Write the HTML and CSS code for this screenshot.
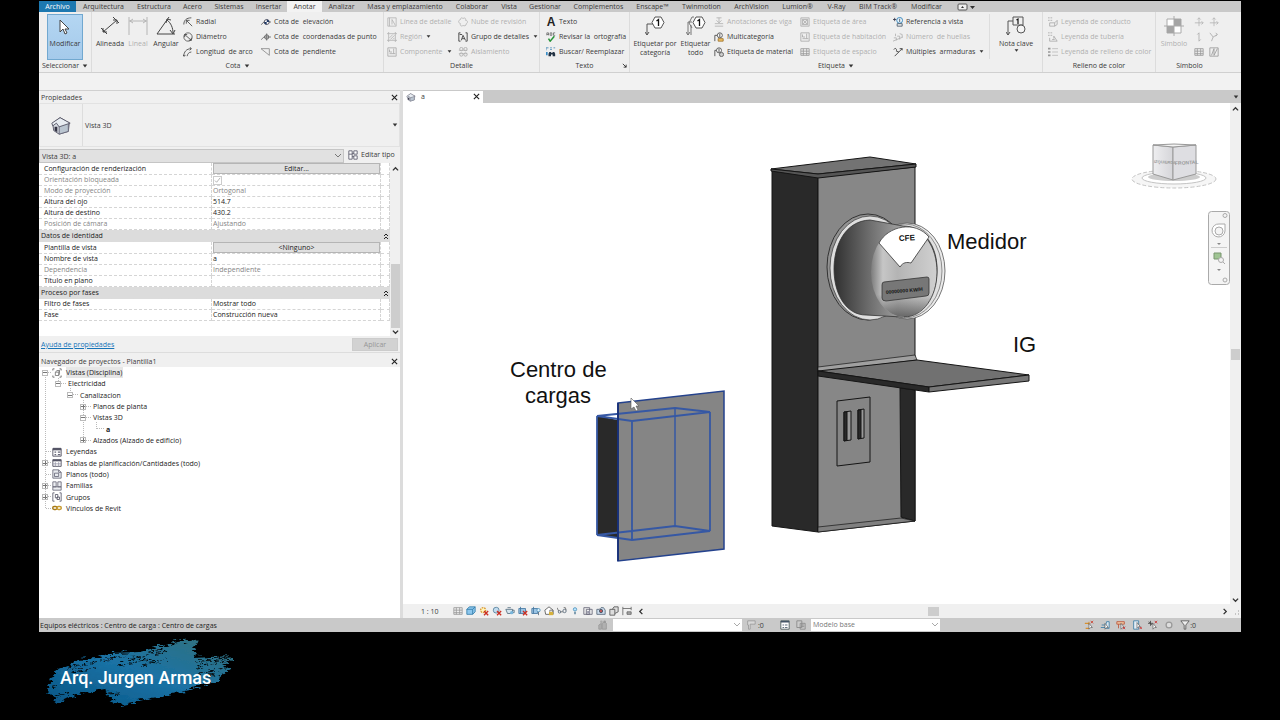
FILE: index.html
```html
<!DOCTYPE html>
<html lang="es">
<head>
<meta charset="utf-8">
<title>Plantilla1 - Vista 3D: a</title>
<link rel="stylesheet" href="styles.css">
</head>
<body>
<svg class="defs" aria-hidden="true">
  <defs>
    <symbol id="cursor" viewBox="0 0 12 16"><path d="M1 1v12l3-3 2 5 2-1-2-4h4z" fill="#fff" stroke="#444"/></symbol>
    <symbol id="aligned" viewBox="0 0 20 20"><path d="M3 16 17 4M1 12l6 6M13 1l6 6M3 12v4h4M13 4h4v4" fill="none" stroke="#444"/></symbol>
    <symbol id="linear" viewBox="0 0 20 20"><path d="M1 1v18M19 1v18M1 5h18M5 3 2 5l3 2M15 3l3 2-3 2" fill="none" stroke="#b5b5b5"/></symbol>
    <symbol id="angular" viewBox="0 0 20 20"><path d="M1 18h18M1 18 13 1M11 4c4 3 6 8 6 13M10 7l1-4 4 1M14 14l3 4 2-4" fill="none" stroke="#444"/></symbol>
    <symbol id="radial" viewBox="0 0 12 12"><path d="M1 9C1 4 4 1 10 1M4 4l7 7M4 8V4h4" fill="none" stroke="#444"/></symbol>
    <symbol id="diameter" viewBox="0 0 12 12"><circle cx="6" cy="6" r="5" fill="none" stroke="#555"/><path d="m2 3 8 7M2 6V3h3M10 7v3H7" fill="none" stroke="#444"/></symbol>
    <symbol id="arc" viewBox="0 0 12 12"><path d="M1 11C1 6 4 2 10 2M5 11c0-2 2-5 5-5M8 0l2 2-2 2M0 9l1 2 2-1" fill="none" stroke="#444"/></symbol>
    <symbol id="elev" viewBox="0 0 14 12"><path d="m0 10 4-4h10" fill="none" stroke="#444"/><circle cx="8" cy="6" r="3.500" fill="#fff" stroke="#223"/><path d="M8 6V2.500a3.500 3.500 0 0 1 3.500 3.500zM8 6v3.500A3.500 3.500 0 0 1 4.500 6z" fill="#223a66"/></symbol>
    <symbol id="coord" viewBox="0 0 14 12"><path d="m0 10 4-4h10M8 1v10" fill="none" stroke="#555"/><circle cx="8" cy="6" r="3" fill="none" stroke="#444"/></symbol>
    <symbol id="slope" viewBox="0 0 12 12"><path d="M0 2h10v8z" fill="none" stroke="#888"/></symbol>
    <symbol id="detline" viewBox="0 0 12 12"><path d="M1 1h10v10H1zM3 1v10M6 3l4 7M6 3v6" fill="none" stroke="#b5b5b5"/></symbol>
    <symbol id="region" viewBox="0 0 12 12"><path d="M2 0v12M10 0v12M0 2h12M0 10h12M3 7l4-4M4 9l5-5M7 9l2-2" fill="none" stroke="#b5b5b5"/></symbol>
    <symbol id="component" viewBox="0 0 12 12"><path d="M1 1h10v10H1zM3 8h7M8 2v6M3 3v3h3" fill="none" stroke="#a8a8a8"/></symbol>
    <symbol id="cloud" viewBox="0 0 12 12"><path d="M3 3c0-3 3-2 3-1 2-2 4 0 3 2 3 0 3 3 1 4 0 3-3 3-4 2-2 2-4 0-3-2-3-1-3-4 0-5z" fill="none" stroke="#b5b5b5"/></symbol>
    <symbol id="detgroup" viewBox="0 0 12 12"><path d="M3 1H1v10h2M9 1h2v10H9M4 10l2-6 3 6M5 8h3M2 3h3" fill="none" stroke="#333"/></symbol>
    <symbol id="insul" viewBox="0 0 12 12"><path d="M1 4h10M1 8h10" stroke="#bbb"/><g fill="none" stroke="#aaa"><circle cx="4" cy="2.500" r="2"/><circle cx="9" cy="2.500" r="2"/><circle cx="4" cy="9" r="2"/><circle cx="9" cy="9" r="2"/></g></symbol>
    <symbol id="spell" viewBox="0 0 12 12"><path d="M1 4V1h2v3M1 3h2M5 1v3h2V1zM9 4V1h2M9 4h2" fill="none" stroke="#555" stroke-width=".8"/><path d="m3 8 2 3 5-6" fill="none" stroke="#269436" stroke-width="1.800"/></symbol>
    <symbol id="find" viewBox="0 0 12 12"><path d="M0 4V1h3M5 1h2M5 3h2M9 1h2" fill="none" stroke="#3e85b5"/><path d="M4 6h2v5H3V8zm4 0h2l1 2v3H8zM5 7h4v2H5z" fill="#234"/><path d="M1 6v4" stroke="#398cc5" stroke-width="2"/></symbol>
    <symbol id="tag" viewBox="0 0 20 20"><path d="M2 19V8h6M0 16l2 3 2-3" fill="none" stroke="#555"/><path d="M10 1h6l3 5.500-3 5.500h-6L7 6.500z" fill="#fff" stroke="#555"/><path d="m11.500 5 2-1.500V10" fill="none" stroke="#111" stroke-width="1.300"/></symbol>
    <symbol id="tags" viewBox="0 0 20 20"><path d="M2 19V6h4M5 19V9M0 16l2 3 2-3M8 1H6L3 7l3 5" fill="none" stroke="#777"/><path d="M10 1h6l3 5.500-3 5.500h-6L7 6.500z" fill="#fff" stroke="#555"/><path d="m11.500 5 2-1.500V10" fill="none" stroke="#111" stroke-width="1.300"/></symbol>
    <symbol id="beam" viewBox="0 0 12 12"><path d="M1 8h10M1 11h10M6 1v6M3 4l3 3 3-3M3 1h6" fill="none" stroke="#b0b0b0"/></symbol>
    <symbol id="multi" viewBox="0 0 12 12"><path d="M1 11V4h4" fill="none" stroke="#444"/><circle cx="7" cy="4" r="3" fill="#fff" stroke="#444"/><path d="M7 2v4" stroke="#333"/><path d="M5 8h6v3H5z" fill="#f3c465" stroke="#9b7028"/></symbol>
    <symbol id="material" viewBox="0 0 12 12"><path d="M1 11V4h3" fill="none" stroke="#444"/><circle cx="6" cy="4" r="3" fill="#fff" stroke="#444"/><path d="M6 2v4" stroke="#333"/><circle cx="9" cy="9" r="2.500" fill="#ccc" stroke="#555"/></symbol>
    <symbol id="area" viewBox="0 0 12 12"><path d="M1 1h10v10H1zM3 3h6v6H3zM3 9l6-6M3 3l6 6" fill="#e4e4e4" stroke="#b0b0b0"/></symbol>
    <symbol id="viewref" viewBox="0 0 12 12"><path d="M0 3h4M2 1v4" fill="none" stroke="#334"/><circle cx="8" cy="4" r="3.500" fill="#e8f3fa" stroke="#287db7"/><path d="M8 2v4M5 8h6v3H5z" fill="none" stroke="#456"/></symbol>
    <symbol id="steps" viewBox="0 0 12 12"><path d="m0 11 12-5M1 7h3v3M5 5h3v4M8 2l3 1v3M3 2v3" fill="none" stroke="#b0b0b0"/></symbol>
    <symbol id="rebar" viewBox="0 0 12 12"><path d="m2 11 9-9M1 3c2-3 4 0 3 2l3 1M8 2h3v2" fill="none" stroke="#333"/></symbol>
    <symbol id="keynote" viewBox="0 0 20 20"><path d="M2 19V5h5M0 16l2 3 2-3M7 1h10v8H7z" fill="none" stroke="#555"/><circle cx="15" cy="13" r="4" fill="#f4f4f4" stroke="#555"/><path d="m10.500 4 1.500-1v5" fill="none" stroke="#111" stroke-width="1.200"/></symbol>
    <symbol id="legend" viewBox="0 0 12 12"><path d="M0 1h2M3 1h2M0 4h2M3 4h2M2 7h6v4H2zM8 7l3-3v5l-3 2" fill="none" stroke="#aaa"/></symbol>
    <symbol id="pipe" viewBox="0 0 12 12"><path d="M0 1h2M3 1h2M0 4h2M3 4h2M2 7v4h9L7 5v3M5 9h3" fill="none" stroke="#aaa"/></symbol>
    <symbol id="list" viewBox="0 0 12 12"><path d="M0 2h3M0 6h3M0 10h3" stroke="#999" stroke-width="2"/><path d="M5 2h7M5 6h7M5 10h7" stroke="#bbb"/></symbol>
    <symbol id="target" viewBox="0 0 20 20"><path d="M3 3h14v14H3z" fill="#fff" stroke="#aaa"/><path d="M10 3h7v7h-7zM3 10h7v7H3z" fill="#a5a5a5"/><path d="M10 0v20M0 10h20" stroke="#aaa"/></symbol>
    <symbol id="span" viewBox="0 0 12 12"><path d="M6 1v10M1 7h10M4 3l2-2 2 2M9 5l2 2-2 2" fill="none" stroke="#b5b5b5"/></symbol>
    <symbol id="vert" viewBox="0 0 12 12"><path d="M6 1v10M4 3l2-2M6 11l2-2" fill="none" stroke="#aaa"/></symbol>
    <symbol id="path" viewBox="0 0 12 12"><path d="m1 1 4 5-2 5M5 6l5-3M8 1l2 2-2 2" fill="none" stroke="#aaa"/></symbol>
    <symbol id="fabric" viewBox="0 0 12 12"><path d="M1 1h10v10H1zM3 10l3-8v8l4-8" fill="none" stroke="#999"/></symbol>
    <symbol id="hatch" viewBox="0 0 12 12"><path d="M1 2h10v8H1zM1 5h10M1 8h10M4 2v8M8 2v8" fill="none" stroke="#999"/></symbol>
    <symbol id="house" viewBox="0 0 24 24"><path d="m3 10 8-6 10 6-1 9-10 3-6-4z" fill="#d8dde4" stroke="#556"/><path d="m10 13 10-4v10l-10 3z" fill="#bac5d0" stroke="#667"/><path d="m2 10 9-6 11 6-12 4-3-4-4 3z" fill="#e8edf2" stroke="#556"/><path d="M5 14h3v6l-3-2z" fill="#334"/></symbol>
    <symbol id="edit" viewBox="0 0 12 12"><path d="M1 1h4v10H1zM1 5h4M7 1h4v4H7zM7 7h4v4H7zM5 4h2M5 8h2" fill="#fff" stroke="#556"/></symbol>
    <symbol id="views" viewBox="0 0 12 12"><path d="M3 1H1v2M9 1h2v2M1 9v2h2M11 9v2H9" fill="none" stroke="#666"/><path d="M4 5h4v4H4zM4 5l2-2h3v4L8 9M8 5l1-2" fill="none" stroke="#777"/></symbol>
    <symbol id="legendi" viewBox="0 0 12 12"><path d="M1 2h10v9H1z" fill="#fff" stroke="#445"/><path d="M1 1h10v3H1z" fill="#556"/><path d="M3 6h2M7 6h3M3 9h2M7 9h3" stroke="#667" stroke-width="1.500"/></symbol>
    <symbol id="tablei" viewBox="0 0 12 12"><path d="M1 2h10v8H1z" fill="#fff" stroke="#445"/><path d="M1 2h10v2H1z" fill="#556"/><path d="M4 5v5M8 5v5M1 7h10" stroke="#99a"/></symbol>
    <symbol id="sheet" viewBox="0 0 12 12"><path d="M1 1h7l3 3v7H1zM3 5h5v4H3zM8 1v3h3" fill="#e8ebef" stroke="#667"/></symbol>
    <symbol id="family" viewBox="0 0 12 12"><path d="M1 1h4v6H1zM7 1h4v6H7zM1 7h10v4H1z" fill="#eceef2" stroke="#667"/></symbol>
    <symbol id="group" viewBox="0 0 12 12"><path d="M3 1H1v10h2M9 1h2v10H9M4 3h3v4H4zM6 6h3v3H6z" fill="none" stroke="#556"/></symbol>
    <symbol id="link" viewBox="0 0 14 12"><rect x="1" y="4" width="6" height="4" rx="2" fill="none" stroke="#a77a18" stroke-width="2"/><rect x="7" y="4" width="6" height="4" rx="2" fill="none" stroke="#c79a30" stroke-width="2"/></symbol>
    <symbol id="cube" viewBox="0 0 12 12"><path d="M1 4 4 1h7v6l-3 3H1z" fill="#8cc7ee" stroke="#347da9"/><path d="M1 4h7v6M8 4l3-3" fill="none" stroke="#347da9"/></symbol>
    <symbol id="off" viewBox="0 0 12 12"><circle cx="5" cy="5" r="3.500" fill="#c2dcef" stroke="#58829e"/><path d="m6 6 5 5m0-5-5 5" stroke="#cb3024" stroke-width="1.600"/></symbol>
    <symbol id="cropoff" viewBox="0 0 12 12"><path d="M1 3h8v6H1zM3 1v8" fill="#9bc4e4" stroke="#4477a0"/><path d="m6 6 5 5m0-5-5 5" stroke="#cb3024" stroke-width="1.600"/></symbol>
    <symbol id="cropbulb" viewBox="0 0 12 12"><path d="M1 3h7v6H1zM3 1v8" fill="#9bc4e4" stroke="#4477a0"/><circle cx="9" cy="5" r="2" fill="#dff2ff" stroke="#4b91bb"/><path d="M9 7v4" stroke="#567"/></symbol>
    <symbol id="sun" viewBox="0 0 12 12"><circle cx="5" cy="5" r="3" fill="#fff5bb" stroke="#d9952a" stroke-width="1.500" stroke-dasharray="2 1"/><path d="m6 6 5 5m0-5-5 5" stroke="#cb3024" stroke-width="1.600"/></symbol>
    <symbol id="teapot" viewBox="0 0 12 12"><path d="M1 4h8v5H3zM9 5h2v3H9M3 2h4" fill="#d5e5ef" stroke="#556f80"/><circle cx="8" cy="8" r="2" fill="#79b6db"/></symbol>
    <symbol id="crop" viewBox="0 0 12 12"><path d="M1 2h7v8H1zM4 4h7v6H4z" fill="none" stroke="#667"/><path d="M5 6h3v3H5z" fill="#99a"/></symbol>
    <symbol id="cropred" viewBox="0 0 12 12"><path d="M1 4h3l2-2h3l2 3v5H1z" fill="#cde" stroke="#567"/><circle cx="6" cy="6" r="2" fill="#b55" stroke="#456"/></symbol>
    <symbol id="box" viewBox="0 0 12 12"><path d="M1 4h6v7H1zM4 4l2-3h5v6L7 9" fill="#ddd" stroke="#555"/></symbol>
    <symbol id="lock" viewBox="0 0 12 12"><path d="M1 5 6 1l5 4v5H2z" fill="#fff" stroke="#555"/><path d="M6 7h5v4H6z" fill="#d6b13b"/><path d="M7 7V5h3v2" fill="none" stroke="#666"/></symbol>
    <symbol id="glasses" viewBox="0 0 12 12"><path d="m0 2 2 4M4 7h3M10 2l1 3M8 2h2" fill="none" stroke="#666"/><circle cx="3" cy="7" r="1.500" fill="none" stroke="#567"/><circle cx="9" cy="6" r="2" fill="none" stroke="#567"/></symbol>
    <symbol id="bulb" viewBox="0 0 12 12"><circle cx="6" cy="4" r="2" fill="#bce5ff" stroke="#4b91bb"/><path d="M5 7h2v3H5z" fill="#6a8da3"/></symbol>
    <symbol id="dim" viewBox="0 0 12 12"><path d="M1 1v10M1 3h10M11 1v4M6 7h5v3H6z" fill="#aaa" stroke="#666"/></symbol>
    <symbol id="people" viewBox="0 0 12 12"><path d="M1 11V6l3-2v7zM5 11V4l3-2 2 2v7z" fill="#b0b0b0" stroke="#999"/><circle cx="4" cy="2" r="1.500" fill="#aaa"/><circle cx="8" cy="2" r="1.500" fill="#999"/></symbol>
    <symbol id="brush" viewBox="0 0 12 12"><path d="M2 1h9v4H5v6H3V6H2z" fill="#d8d8d8" stroke="#999"/></symbol>
    <symbol id="funnel" viewBox="0 0 12 12"><path d="M1 1h10L7 6v5H5V6z" fill="#eee" stroke="#555"/></symbol>
    <symbol id="sel" viewBox="0 0 12 12"><path d="M2 10h4M1 4h5M6 2v4" fill="none" stroke="#d79030" stroke-width="1.300"/><path d="M6 4v7l2-2h2z" fill="#fff" stroke="#555" stroke-width=".8"/><path d="m8 1 3 3m0-3L8 4" stroke="#cb3f2c"/></symbol>
    <symbol id="sel2" viewBox="0 0 12 12"><path d="M1 9h5l2-7h3v8H6M2 6h5" fill="#dce9f2" stroke="#397ba5"/><path d="M6 4v7l2-2h2z" fill="#fff" stroke="#555" stroke-width=".8"/></symbol>
    <symbol id="sel3" viewBox="0 0 12 12"><path d="M1 2h9v3H1zM3 5v5" fill="#f2c6a0" stroke="#bb553b"/><path d="M6 4v7l2-2h2z" fill="#fff" stroke="#555" stroke-width=".8"/><path d="m8 8 3 3m0-3-3 3" stroke="#c33"/></symbol>
    <symbol id="sel4" viewBox="0 0 12 12"><path d="M2 1h6v10H2z" fill="#e4edf5" stroke="#397ba5"/><path d="M6 3v7l2-2h2z" fill="#fff" stroke="#555" stroke-width=".8"/><path d="m9 8 3 3m0-3-3 3" stroke="#c33"/></symbol>
    <symbol id="sel5" viewBox="0 0 12 12"><path d="M0 4h6M3 1v6M1 2l4 4" fill="none" stroke="#444"/><path d="M6 4v7l2-2h2z" fill="#fff" stroke="#555" stroke-width=".8"/><path d="m8 1 3 3m0-3L8 4" stroke="#c33"/></symbol>
    <symbol id="win" viewBox="0 0 12 12"><path d="M1 1h10v10H1z" fill="#fff" stroke="#455"/><path d="M1 1h10v2H1z" fill="#456"/><path d="M3 6h2M6 6h3M3 9h2M6 9h3" stroke="#456"/></symbol>
    <symbol id="opts" viewBox="0 0 12 12"><path d="M1 1h6v8H1zM5 4h6v7H5zM6 6h4M6 8h4" fill="#ccc" stroke="#888"/></symbol>
    <symbol id="close" viewBox="0 0 8 8"><path d="m1 1 6 6m0-6L1 7" stroke="#222" stroke-width="1.300"/></symbol>
    <symbol id="chev" viewBox="0 0 8 8"><path d="m1 5 3-3 3 3" fill="none" stroke="#333" stroke-width="1.500"/></symbol>
    <symbol id="dchev" viewBox="0 0 8 8"><path d="m2 4 2-2 2 2M2 7l2-2 2 2" fill="none" stroke="#222"/></symbol>
    <symbol id="tri" viewBox="0 0 8 8"><path d="M1 2h6L4 6z" fill="#333"/></symbol>
  </defs>
</svg>

<div class="app">
  <nav class="tabs" aria-label="Cinta">
    <button class="file">Archivo</button><button>Arquitectura</button><button>Estructura</button><button>Acero</button><button>Sistemas</button><button>Insertar</button><button class="active">Anotar</button><button>Analizar</button><button>Masa y emplazamiento</button><button>Colaborar</button><button>Vista</button><button>Gestionar</button><button>Complementos</button><button>Enscape™</button><button>Twinmotion</button><button>ArchVision</button><button>Lumion®</button><button>V-Ray</button><button>BIM Track®</button><button>Modificar</button>
    <button class="pin" aria-label="Minimizar cinta"><svg viewBox="0 0 22 8"><rect x="3" y="1" width="9" height="6" rx="1" fill="#eee" stroke="#555"/><path d="M6 5l1.500-2L9 5zM15 3h5l-2.500 3z" fill="#333"/></svg></button>
  </nav>

  <div class="ribbon">
    <section class="rgroup g-select">
      <div class="tools"><button class="big modify"><svg><use href="#cursor"/></svg>Modificar</button></div>
      <h2>Seleccionar <svg class="tri"><use href="#tri"/></svg></h2>
    </section>
    <section class="rgroup g-cota">
      <div class="tools">
        <button class="big"><svg><use href="#aligned"/></svg>Alineada</button>
        <button class="big" disabled><svg><use href="#linear"/></svg>Lineal</button>
        <button class="big"><svg><use href="#angular"/></svg>Angular</button>
        <div class="stack"><button><svg><use href="#radial"/></svg>Radial</button><button><svg><use href="#diameter"/></svg>Diámetro</button><button><svg><use href="#arc"/></svg>Longitud&nbsp; de arco</button></div>
        <div class="stack"><button><svg><use href="#elev"/></svg>Cota de&nbsp; elevación</button><button><svg><use href="#coord"/></svg>Cota de&nbsp; coordenadas de punto</button><button><svg><use href="#slope"/></svg>Cota de&nbsp; pendiente</button></div>
      </div>
      <h2>Cota <svg class="tri"><use href="#tri"/></svg></h2>
    </section>
    <section class="rgroup g-detalle">
      <div class="tools">
        <div class="stack"><button disabled><svg><use href="#detline"/></svg>Línea de detalle</button><button disabled><svg><use href="#region"/></svg>Región <svg class="tri"><use href="#tri"/></svg></button><button disabled><svg><use href="#component"/></svg>Componente <svg class="tri"><use href="#tri"/></svg></button></div>
        <div class="stack"><button disabled><svg><use href="#cloud"/></svg>Nube de revisión</button><button><svg><use href="#detgroup"/></svg>Grupo de detalles <svg class="tri"><use href="#tri"/></svg></button><button disabled><svg><use href="#insul"/></svg>Aislamiento</button></div>
      </div>
      <h2>Detalle</h2>
    </section>
    <section class="rgroup g-texto">
      <div class="tools"><div class="stack"><button><b class="letter">A</b>Texto</button><button><svg><use href="#spell"/></svg>Revisar la&nbsp; ortografía</button><button><svg><use href="#find"/></svg>Buscar/ Reemplazar</button></div></div>
      <h2>Texto<svg class="launch" viewBox="0 0 6 6"><path d="m1 1 4 4M5 2v3H2" fill="none" stroke="#222"/></svg></h2>
    </section>
    <section class="rgroup g-etiqueta">
      <div class="tools">
        <button class="big"><svg><use href="#tag"/></svg>Etiquetar por<br>categoría</button>
        <button class="big"><svg><use href="#tags"/></svg>Etiquetar<br>todo</button>
        <div class="stack"><button disabled><svg><use href="#beam"/></svg>Anotaciones de viga</button><button><svg><use href="#multi"/></svg>Multicategoría</button><button><svg><use href="#material"/></svg>Etiqueta de material</button></div>
        <div class="stack"><button disabled><svg><use href="#area"/></svg>Etiqueta de área</button><button disabled><svg><use href="#component"/></svg>Etiqueta de habitación</button><button disabled><svg><use href="#hatch"/></svg>Etiqueta de espacio</button></div>
        <div class="stack"><button><svg><use href="#viewref"/></svg>Referencia a vista</button><button disabled><svg><use href="#steps"/></svg>Número&nbsp; de huellas</button><button><svg><use href="#rebar"/></svg>Múltiples&nbsp; armaduras <svg class="tri"><use href="#tri"/></svg></button></div>
        <button class="big note"><svg><use href="#keynote"/></svg>Nota clave<svg class="tri"><use href="#tri"/></svg></button>
      </div>
      <h2>Etiqueta <svg class="tri"><use href="#tri"/></svg></h2>
    </section>
    <section class="rgroup g-relleno">
      <div class="tools"><div class="stack"><button disabled><svg><use href="#legend"/></svg>Leyenda de conducto</button><button disabled><svg><use href="#pipe"/></svg>Leyenda de tubería</button><button disabled><svg><use href="#list"/></svg>Leyenda de relleno de color</button></div></div>
      <h2>Relleno de color</h2>
    </section>
    <section class="rgroup g-simbolo">
      <div class="tools">
        <button class="big" disabled><svg><use href="#target"/></svg>Símbolo</button>
        <div class="stack"><button disabled aria-label="Dirección de tramo"><svg><use href="#span"/></svg></button><button disabled aria-label="Viga"><svg><use href="#vert"/></svg></button><button disabled aria-label="Área"><svg><use href="#hatch"/></svg></button></div>
        <div class="stack"><button disabled aria-label="Camino"><svg><use href="#span"/></svg></button><button disabled aria-label="Trayectoria"><svg><use href="#path"/></svg></button><button disabled aria-label="Refuerzo"><svg><use href="#fabric"/></svg></button></div>
      </div>
      <h2>Símbolo</h2>
    </section>
  </div>
  <div class="options"></div>

  <main class="work">
    <aside class="side">
      <header class="phead"><h2>Propiedades</h2><button aria-label="Cerrar propiedades"><svg><use href="#close"/></svg></button></header>
      <div class="type"><div class="thumb"><svg><use href="#house"/></svg></div><span>Vista 3D</span><svg class="tri"><use href="#tri"/></svg></div>
      <div class="instance">
        <select aria-label="Vista"><option>Vista 3D: a</option></select>
        <button><svg><use href="#edit"/></svg>Editar tipo</button>
      </div>
      <div class="proparea">
        <table class="props">
          <tr class="tall"><th>Configuración de renderización</th><td><button>Editar...</button></td><td></td></tr>
          <tr class="off"><th><label for="lock-view">Orientación bloqueada</label></th><td><input type="checkbox" id="lock-view" checked disabled></td><td></td></tr>
          <tr class="off"><th>Modo de proyección</th><td>Ortogonal</td><td></td></tr>
          <tr><th>Altura del ojo</th><td>514.7</td><td></td></tr>
          <tr><th>Altura de destino</th><td>430.2</td><td></td></tr>
          <tr class="off"><th>Posición de cámara</th><td>Ajustando</td><td></td></tr>
          <tr class="cat tall"><th colspan="2">Datos de identidad</th><td><svg><use href="#dchev"/></svg></td></tr>
          <tr class="tall"><th>Plantilla de vista</th><td><button>&lt;Ninguno&gt;</button></td><td></td></tr>
          <tr><th>Nombre de vista</th><td>a</td><td></td></tr>
          <tr class="off"><th>Dependencia</th><td>Independiente</td><td></td></tr>
          <tr><th>Título en plano</th><td></td><td></td></tr>
          <tr class="cat tall"><th colspan="2">Proceso por fases</th><td><svg><use href="#dchev"/></svg></td></tr>
          <tr><th>Filtro de fases</th><td>Mostrar todo</td><td></td></tr>
          <tr><th>Fase</th><td>Construcción nueva</td><td></td></tr>
        </table>
        <div class="vscroll"><svg><use href="#chev"/></svg><i class="space"></i><i class="bar"></i><svg class="down"><use href="#chev"/></svg></div>
      </div>
      <div class="help"><a href="#">Ayuda de propiedades</a><button disabled>Aplicar</button></div>
      <header class="phead nav"><h2>Navegador de proyectos - Plantilla1</h2><button aria-label="Cerrar navegador"><svg><use href="#close"/></svg></button></header>
      <div class="browser">
        <svg class="lines" viewBox="0 0 80 150"><path d="M6.500 6v135M7 5.500h8M19.500 11v5M20 16.500h8M31.500 21v6M32 27.500h8M44.500 33v40M45 39.500h8M45 50.500h8M45 73.500h8M57.500 55v7M58 61.500h8M7 84.500h8M7 95.500h8M7 107.500h8M7 118.500h8M7 129.500h8M7 141.500h8" stroke="#bbb" stroke-dasharray="1 1" fill="none"/></svg>
        <ul class="tree">
          <li><i class="minus"></i><svg><use href="#views"/></svg><span class="current">Vistas (Disciplina)</span></li>
          <li class="l1"><i class="minus"></i>Electricidad</li>
          <li class="l2"><i class="minus"></i>Canalizacion</li>
          <li class="l3"><i class="plus"></i>Planos de planta</li>
          <li class="l3"><i class="minus"></i>Vistas 3D</li>
          <li class="l4"><b>a</b></li>
          <li class="l3"><i class="plus"></i>Alzados (Alzado de edificio)</li>
          <li class="leaf"><svg><use href="#legendi"/></svg>Leyendas</li>
          <li><i class="plus"></i><svg><use href="#tablei"/></svg>Tablas de planificación/Cantidades (todo)</li>
          <li class="leaf"><svg><use href="#sheet"/></svg>Planos (todo)</li>
          <li><i class="plus"></i><svg><use href="#family"/></svg>Familias</li>
          <li><i class="plus"></i><svg><use href="#group"/></svg>Grupos</li>
          <li class="leaf"><svg><use href="#link"/></svg>Vínculos de Revit</li>
        </ul>
      </div>
    </aside>

    <section class="view">
      <div class="vtabs"><div class="vtab"><svg><use href="#house"/></svg><span>a</span><button aria-label="Cerrar vista"><svg><use href="#close"/></svg></button></div><svg class="tri"><use href="#tri"/></svg></div>
      <div class="canvasrow">
        <svg class="scene" viewBox="403 103 827 501" role="img" aria-label="Modelo 3D">
          <defs>
            <linearGradient id="cyl"><stop offset="0" stop-color="#303030"/><stop offset=".4" stop-color="#777"/><stop offset=".7" stop-color="#aaa"/></linearGradient>
            <linearGradient id="face"><stop offset="0" stop-color="#7c7c7c"/><stop offset=".18" stop-color="#c6c6c6"/><stop offset=".4" stop-color="#b4b4b4"/><stop offset="1" stop-color="#d0d0d0"/></linearGradient>
            <linearGradient id="shade" x2="0" y2="1"><stop offset=".75" stop-color="#444" stop-opacity="0"/><stop offset="1" stop-color="#444" stop-opacity=".7"/></linearGradient>
            <linearGradient id="left"><stop offset="0" stop-color="#eeeef0"/><stop offset="1" stop-color="#d5d5d9"/></linearGradient>
          </defs>
          <g stroke="#151515" stroke-width="1">
            <path d="m772 171 46 6v355l-46-6z" fill="#292929"/>
            <path d="m818 177 97-10v354l-97 11z" fill="#878787"/>
            <path d="m771 169 99-12 46 7-98 10z" fill="#737373"/>
            <path d="m771 169 47 5 98-10v3l-98 11-47-7z" fill="#555"/>
            <path d="m900 388 15 2v131l-14-4z" fill="#292929"/>
            <path d="m818 527 83-9 14 3-97 11z" fill="#808080" stroke-width=".7"/>
            <path d="m818 367 97-12 2 5-99 12z" fill="#a0a0a0" stroke-width=".7"/>
            <path d="m818 371 99-11 112 15-100 12z" fill="#717171"/>
            <path d="m818 371 111 16v5l-111-16z" fill="#292929"/>
            <path d="m929 387 100-12v6l-100 11z" fill="#777"/>
            <path d="m837 401 33-4v65l-33 4z" fill="#858585"/>
            <path d="m844 412 7-1v29l-7 1zM858 410l6-1v29l-6 1z" fill="#999"/>
            <path d="m844 412 3 0v28l-3 1zM858 410h3v28l-3 1z" fill="#292929"/>
          </g>
          <g stroke="#333">
            <ellipse cx="868" cy="267" rx="41" ry="53" fill="#929292"/>
            <ellipse cx="870" cy="268" rx="40" ry="52" fill="#dedede" stroke-width=".7"/>
            <ellipse cx="907" cy="271" rx="38" ry="48" fill="#ebebeb" stroke="#555" stroke-width=".8"/>
            <ellipse cx="905" cy="271" rx="37" ry="47" fill="#e0e0e0" stroke="#777" stroke-width=".8"/>
            <path d="M870 220c-26 1-36 27-36 49 0 25 12 46 32 46l36 2c24-2 35-25 35-48 0-24-14-43-34-43z" fill="url(#cyl)" stroke-width=".8"/>
            <ellipse cx="904" cy="272" rx="33" ry="45" fill="url(#face)" stroke="none"/>
            <ellipse cx="904" cy="272" rx="33" ry="45" fill="url(#shade)" stroke="none"/>
            <path d="M904 227c20 0 33 20 33 45s-14 45-33 45" fill="none" stroke-width=".8"/>
            <path d="M879 243c9-17 36-23 50-6l-18 26c-4-1-8-1-11 4z" fill="#fff" stroke-width=".8"/>
            <path d="m884 282 43-5q2 0 2 2v14q0 3-3 3l-40 5q-4 0-4-3v-13q0-3 2-3z" fill="#777" stroke-width=".8"/>
          </g>
          <text class="cfe" x="899" y="241" transform="rotate(-3 899 241)">CFE</text>
          <text class="meter" x="886" y="294" transform="rotate(-5 886 294)">00000000 KW/H</text>
          <g class="labels"><text x="947" y="249">Medidor</text><text x="1013" y="352">IG</text><text x="510" y="377">Centro de</text><text x="525" y="403">cargas</text></g>
          <path d="m597 416 21 4v118l-21-3z" fill="#292929"/>
          <path d="m618 403 106-12v158l-106 12z" fill="#858585"/>
          <g fill="none" stroke="#3658a4" stroke-width="1.800"><path d="m597 416 78-8 35 4-78 9zM597 535l78-9 35 5-78 9zM597 416v119M632 421v119M710 412v119"/><path d="M675 408v118" stroke-width="1.500"/><path d="m618 403 106-12v158l-106 12z" stroke="#24428d" stroke-width="1.500"/><path d="M618 403v158" stroke="#172f78"/></g>
          <path d="M631 398v11l3-2 2 4 2-1-2-4h3z" fill="#fff" stroke="#555" stroke-width=".6"/>
          <g stroke="#c4c4c4" fill="#f6f6f6">
            <ellipse cx="1174" cy="179" rx="42" ry="9" stroke-dasharray="4 2"/><ellipse cx="1174" cy="178" rx="32" ry="6" fill="#fff"/>
            <ellipse cx="1174" cy="177" rx="26" ry="4" fill="#ccc" stroke="none"/>
            <path d="m1153 145 20 2v33l-20-6z" fill="url(#left)" stroke="#999"/><path d="m1173 147 23-2v29l-23 6z" fill="#dedee2" stroke="#999"/><path d="m1153 145 21-1 22 1-23 2z" fill="#f4f4f4" stroke="#999"/>
          </g>
          <text class="cubetxt izq" x="1154" y="163" transform="rotate(3 1154 163)">IZQUIERDA</text><text class="cubetxt" x="1175" y="165" transform="rotate(-3 1175 165)">FRONTAL</text>
          <g fill="#f4f4f4" stroke="#aaa">
            <rect x="1208.500" y="211.500" width="21" height="73" rx="3"/><circle cx="1225" cy="215.500" r="2"/><circle cx="1225" cy="280" r="2"/>
            <path d="M1219 224h6v7a6.500 6.500 0 1 1-6-7z" fill="#fff"/><circle cx="1219" cy="231" r="4"/><path d="M1211 247.500h16" stroke="#ccc"/><path d="M1214 253h7v6h-7z" fill="#9fc493" stroke="#79956f"/><circle cx="1221" cy="260" r="2.500"/><path d="m1223 262 2 2"/><path d="M1217 243h4l-2 2zM1217 269h4l-2 2z" fill="#888" stroke="none"/>
          </g>
        </svg>
        <div class="vscroll"><svg><use href="#chev"/></svg><i class="space"></i><i class="bar"></i><i class="space"></i><svg class="down"><use href="#chev"/></svg></div>
      </div>
      <div class="vcontrol">
        <span class="scale">1 : 10</span>
        <div class="vicons"><svg><use href="#hatch"/></svg><svg><use href="#cube"/></svg><svg><use href="#sun"/></svg><svg><use href="#off"/></svg><svg><use href="#teapot"/></svg><svg><use href="#cropoff"/></svg><svg><use href="#cropbulb"/></svg><svg><use href="#lock"/></svg><svg><use href="#glasses"/></svg><svg><use href="#bulb"/></svg><svg><use href="#crop"/></svg><svg><use href="#cropred"/></svg><svg><use href="#box"/></svg><svg><use href="#dim"/></svg></div>
        <svg class="arrow lft"><use href="#chev"/></svg><div class="track"><i></i></div><svg class="arrow rgt"><use href="#chev"/></svg><svg class="grip" viewBox="0 0 10 10"><path d="M7 8h1M4 8h1M7 5h1" stroke="#999"/></svg>
      </div>
    </section>
  </main>

  <footer class="status">
    <span class="msg">Equipos eléctricos : Centro de carga : Centro de cargas</span>
    <svg><use href="#people"/></svg>
    <select class="work-set" aria-label="Subproyecto"><option></option></select>
    <svg><use href="#brush"/></svg><span class="count">:0</span>
    <svg><use href="#win"/></svg><svg class="second"><use href="#opts"/></svg>
    <select class="option-set" aria-label="Opción de diseño"><option>Modelo base</option></select>
    <div class="right"><svg><use href="#sel"/></svg><svg><use href="#sel2"/></svg><svg><use href="#sel3"/></svg><svg><use href="#sel4"/></svg><svg><use href="#sel5"/></svg><svg viewBox="0 0 12 12"><circle cx="6" cy="6" r="3.500" fill="#ddd" stroke="#999" stroke-width="1.500"/></svg><svg><use href="#funnel"/></svg></div><span>:0</span>
  </footer>
</div>

<div class="credit">
  <svg viewBox="0 0 190 74" aria-hidden="true">
    <defs>
      <linearGradient id="paint" x1="0" y1="1" x2="1" y2="0"><stop offset="0" stop-color="#075686"/><stop offset=".5" stop-color="#1a72a5"/><stop offset="1" stop-color="#34727b"/></linearGradient>
      <filter id="rough" x="-5%" y="-10%" width="110%" height="120%"><feTurbulence type="fractalNoise" baseFrequency=".12 .4" numOctaves="3" seed="4"/><feDisplacementMap in="SourceGraphic" scale="9" xChannelSelector="R" yChannelSelector="G"/></filter>
    </defs>
    <g filter="url(#rough)">
      <path d="M1 54 6 40l5-8 10-4 13-6 17-2 13-5 30-1 17-5 16-4 20-4 7 4-7 4 4 5-4 6 39-2v4l-9 5 7 4-10 8-3 5-14 3-13 5-33 7-34 7-13-2 7-3-12-2 5-4-5-4-25 4-23 10-4-3 4-3-7-2z" fill="url(#paint)"/>
      <path d="m22 30 24-4M36 26l36-6M60 20l28-2M82 22l38-9M104 13l16-2M72 27l34-6M96 27l24-5M150 24l34-5M152 29l32-7M152 35l28-5M156 40l20-5M162 22l20-2M26 34l24-4M12 58l12-4M6 50l9-3M64 56l10-1" stroke="#04090c" stroke-dasharray="5 1 9 2 2 3" fill="none"/>
    </g>
  </svg>
  <p>Arq. Jurgen Armas</p>
</div>
</body>
</html>
```
FILE: styles.css
```css
* { box-sizing: border-box; }
body { margin: 0; min-height: 100vh; background: #000; color: #3a3a3a; font: 7px/11px "Open Sans", "Noto Sans", sans-serif; }
button, select, input { font: inherit; color: inherit; }
button { padding: 0; border: 0; background: none; white-space: nowrap; }
h2, p, ul { margin: 0; padding: 0; font: inherit; }
svg { flex: none; width: 10px; height: 10px; }
svg.tri { width: 6px; height: 6px; }
.defs { position: absolute; width: 0; height: 0; }
.app { margin: 0 39px; padding-top: 1px; background: #000; }

.tabs { display: grid; grid-template-columns: 37px 55px 46px 31px 42px 37px 35px 39px 88px 46px 28px 44px 63px 45px 53px 47px 45px 33px 50px 47px 32px; height: 11px; background: #c9c9c9; }
.tabs button { line-height: 10px; display: block; text-align: center; }
.tabs .file { background: #1d78b0; color: #fff; }
.tabs .active { background: #f3f3f3; }
.tabs .pin { display: flex; align-items: center; justify-content: center; }
.tabs .pin svg { width: 22px; height: 8px; }

.ribbon { display: flex; height: 61px; background: #efefef; border-bottom: 1px solid #d0d0d0; }
.rgroup { display: flex; flex-direction: column; border-right: 1px solid #dcdcdc; }
.tools { display: grid; height: 48px; padding-top: 2px; }
.rgroup h2 { display: flex; justify-content: center; align-items: center; gap: 3px; height: 11px; }
.stack { display: grid; grid-template-rows: repeat(3, 15px); padding-left: 3px; }
.stack button { display: flex; align-items: center; gap: 3px; text-align: left; }
.stack button .tri { width: 5px; height: 5px; margin-left: 1px; }
.letter { width: 10px; font: bold 12px/12px "Liberation Sans", sans-serif; text-align: center; color: #222; }
.big { display: flex; flex-direction: column; align-items: center; height: 45px; line-height: 9px; }
.big svg { width: 20px; height: 20px; margin: 2px 0 3px; }
.big svg.tri { width: 5px; height: 5px; margin: 0; }
button:disabled { color: #b0b0b0; }
.g-select { width: 53px; }
.g-select .tools { padding: 2px 8px 0; }
.modify { height: 46px; border: 1px solid #71a8d0; background: linear-gradient(#b4d6f2, #a5caeb); }
.modify svg { width: 12px; height: 16px; margin: 4px 0; }
.g-cota { width: 292px; }
.g-cota .tools { padding-left: 4px; grid-template-columns: 28px 28px 28px 78px 1fr; }
.g-detalle { width: 156px; }
.g-detalle .tools { grid-template-columns: 71px 1fr; }
.g-texto { width: 90px; }
.g-texto .tools { padding-left: 3px; }
.g-texto h2 { position: relative; }
.launch { position: absolute; right: 2px; width: 5px; height: 5px; }
.g-etiqueta { width: 413px; }
.g-etiqueta .tools { grid-template-columns: 50px 31px 86px 93px 99px 1fr; }
.note { border-left: 1px solid #ddd; }
.g-relleno { width: 113px; }
.g-relleno .tools { padding-left: 2px; }
.g-simbolo { width: 67px; border: 0; }
.g-simbolo .tools { padding-left: 1px; grid-template-columns: 34px 15px 15px; }
.options { height: 17px; background: #f2f2f2; }

.work { display: grid; grid-template-columns: 361px 1fr; column-gap: 3px; height: 528px; background: #dcdcdc; }
.side { display: flex; flex-direction: column; background: #f0f0f0; border-top: 1px solid #d0d0d0; }
.phead { display: flex; justify-content: space-between; align-items: center; height: 12px; padding: 0 2px; }
.phead button { display: flex; }
.phead svg { width: 7px; height: 7px; }
.type { display: flex; align-items: center; height: 44px; border: 1px solid #e2e2e2; padding-right: 1px; }
.thumb { display: flex; align-items: center; justify-content: center; width: 43px; height: 42px; border-right: 1px solid #ddd; }
.thumb svg { width: 22px; height: 22px; }
.type span { flex: 1; padding-left: 2px; }
.instance { display: flex; height: 16px; padding-top: 2px; gap: 4px; }
select { appearance: none; border: 1px solid #c5c5c5; border-radius: 0; padding: 0 2px; }
.instance select { width: 305px; height: 14px; background: #e1e1e1 url("data:image/svg+xml,%3Csvg xmlns='http://www.w3.org/2000/svg' width='8' height='6'%3E%3Cpath d='m1 1 3 3 3-3' fill='none' stroke='%23777'/%3E%3C/svg%3E") no-repeat right 1px center; }
.instance button { display: flex; align-items: center; gap: 3px; height: 11px; }
.proparea { display: flex; height: 173px; background: #fff; }
.props { flex: 1; align-self: flex-start; table-layout: fixed; border-collapse: separate; border-spacing: 0; color: #222; }
.props tr { height: 11px; }
.props tr.tall { height: 12px; }
.props th, .props td { padding: 0 0 0 1px; height: 11px; line-height: 10px; text-align: left; font-weight: 400; border-bottom: 1px dashed #d5d5d5; border-right: 1px dashed #d5d5d5; white-space: nowrap; overflow: hidden; }
.props .tall th, .props .tall td { height: 12px; }
.props th { width: 173px; padding-left: 5px; }
.props td:last-child { width: 8px; padding: 0; }
.props .off { color: #858585; }
.props .cat th, .props .cat td { background: #dcdcdc; border-color: #dcdcdc; padding-left: 2px; }
.props .cat td:last-child { overflow: visible; direction: rtl; padding: 0; }
.props .cat svg { display: block; width: 8px; height: 8px; }
.props td button { display: block; width: 100%; height: 11px; line-height: 8px; border: 1px solid #b5b5b5; background: #e0e0e0; }
.props input { appearance: none; display: block; margin: 0; width: 9px; height: 9px; border: 1px solid #ccc; background: url("data:image/svg+xml,%3Csvg xmlns='http://www.w3.org/2000/svg' viewBox='0 0 8 8'%3E%3Cpath d='m1 4 2 2 4-5' fill='none' stroke='%23aaa'/%3E%3C/svg%3E"); }
.vscroll { display: flex; flex-direction: column; align-items: center; width: 10px; padding: 3px 0 1px; background: #f0f0f0; }
.vscroll svg { width: 7px; height: 7px; }
.vscroll .down { transform: rotate(180deg); }
.space { flex: 1; }
.bar { width: 9px; background: #cdcdcd; }
.proparea .bar { height: 64px; }
.help { display: flex; justify-content: space-between; align-items: center; height: 16px; padding: 0 2px; }
.help a { color: #1674b8; }
.help button { width: 46px; height: 13px; background: #d2d2d2; border: 1px solid #ccc; color: #969696; }
.nav { height: 15px; padding-top: 3px; border-top: 1px solid #ddd; }
.browser { position: relative; flex: 1; background: #fff; color: #222; }
.lines { position: absolute; left: 0; top: 0; width: 80px; height: 150px; }
.tree { position: relative; display: grid; height: 147px; grid-auto-rows: 1fr; list-style: none; padding-left: 3px; }
.tree li { display: flex; align-items: center; }
.tree svg { margin: 0 4px; background: #fff; }
.leaf { padding-left: 6px; }
.tree i { flex: none; width: 6px; height: 6px; border: 1px solid #bbb; background: linear-gradient(#777, #777) center / 4px 1px no-repeat #fff; }
.tree .plus { background: linear-gradient(#777, #777) center / 4px 1px no-repeat, linear-gradient(#777, #777) center / 1px 4px no-repeat #fff; }
.current { padding-right: 1px; background: #e6e6e6; }
.l1 { padding-left: 13px; }
.l2 { padding-left: 25px; }
.l3 { padding-left: 38px; }
.l4 { padding-left: 64px; }
.l1 i, .l2 i, .l3 i { margin-right: 7px; }

.view { display: flex; flex-direction: column; min-width: 0; background: #fff; }
.vtabs { display: flex; justify-content: space-between; align-items: center; height: 13px; padding-right: 2px; background: #c9c9c9; }
.vtab { display: flex; align-items: center; width: 80px; height: 12px; padding: 0 3px; gap: 5px; background: #fff; }
.vtab span { flex: 1; }
.vtab button { display: flex; }
.vtab button svg { width: 7px; height: 7px; }
.canvasrow { display: flex; flex: 1; min-height: 0; }
.canvasrow .vscroll { width: 11px; }
.scene { flex: 1; min-width: 0; width: auto; height: 100%; }
.canvasrow .bar { height: 11px; }
.labels { font: 22px "Liberation Sans", sans-serif; fill: #111; }
.cfe { font: bold 8px "Liberation Sans", sans-serif; fill: #111; }
.meter { font: bold 5px "Liberation Sans", sans-serif; fill: #111; }
.cubetxt { font: bold 5px "Liberation Sans", sans-serif; fill: #999; }
.izq { font-size: 4px; }
.vcontrol { display: flex; align-items: center; height: 14px; background: #f0f0f0; padding-left: 18px; }
.scale { width: 31px; }
.vicons { display: flex; gap: 3px; margin: 0 6px 0 1px; }
.arrow { width: 7px; height: 7px; }
.lft { transform: rotate(-90deg); }
.rgt { transform: rotate(90deg); margin-right: 3px; }
.track { flex: 1; display: flex; justify-content: center; }
.track i { width: 11px; height: 9px; background: #cdcdcd; }

.status { display: flex; align-items: center; height: 14px; padding: 0 45px 0 1px; background: #c9c9c9; }
.msg { width: 558px; color: #222; }
.status select { width: 129px; height: 12px; line-height: 10px; border: 0; color: #777; background: #fff url("data:image/svg+xml,%3Csvg xmlns='http://www.w3.org/2000/svg' width='8' height='6'%3E%3Cpath d='m1 1 3 3 3-3' fill='none' stroke='%23aaa'/%3E%3C/svg%3E") no-repeat right 1px center; }
.status .work-set { margin: 0 4px 0 5px; }
.count { width: 24px; padding-left: 2px; }
.second { margin: 0 5px 0 6px; }
.right { display: flex; gap: 6px; margin-left: auto; }

.credit { display: grid; width: 190px; margin: 6px 0 0 46px; }
.credit svg { grid-area: 1 / 1; width: 190px; height: 74px; }
.credit p { grid-area: 1 / 1; position: relative; padding: 29px 0 0 14px; color: #fff; font: 500 18px/22px Roboto, sans-serif; white-space: nowrap; }
```
